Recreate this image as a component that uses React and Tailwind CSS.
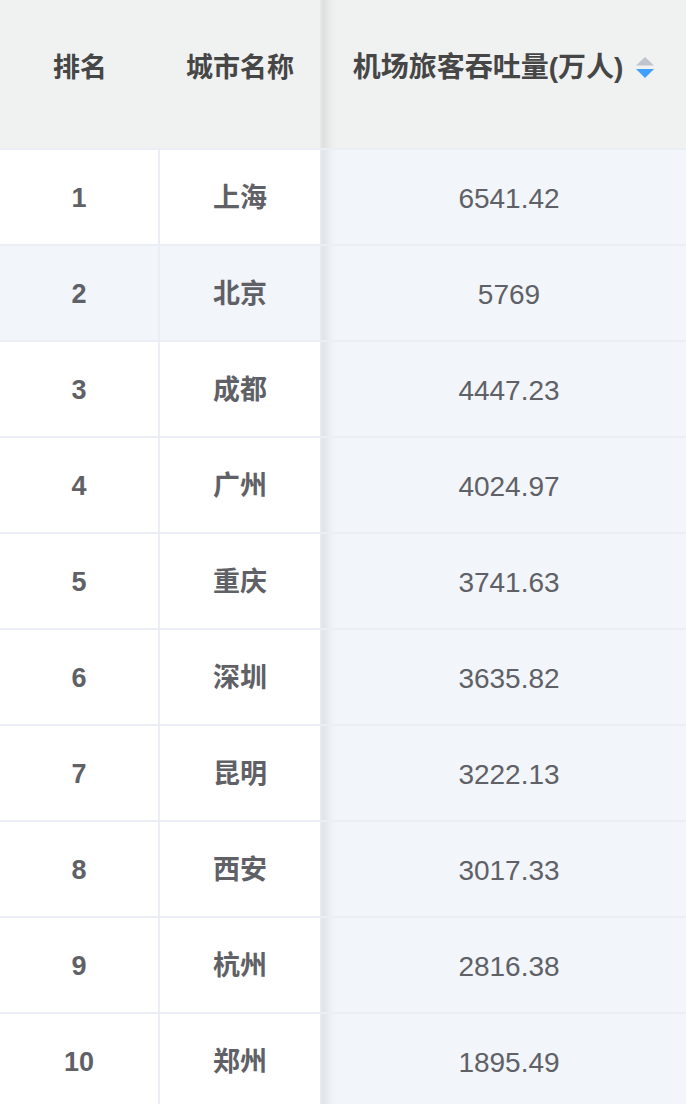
import React from "react";

const rows = [
  { rank: 1, city: "上海", value: "6541.42" },
  { rank: 2, city: "北京", value: "5769" },
  { rank: 3, city: "成都", value: "4447.23" },
  { rank: 4, city: "广州", value: "4024.97" },
  { rank: 5, city: "重庆", value: "3741.63" },
  { rank: 6, city: "深圳", value: "3635.82" },
  { rank: 7, city: "昆明", value: "3222.13" },
  { rank: 8, city: "西安", value: "3017.33" },
  { rank: 9, city: "杭州", value: "2816.38" },
  { rank: 10, city: "郑州", value: "1895.49" },
];

const font = { fontFamily: '"Liberation Sans", "Noto Sans CJK SC", sans-serif' };

const SortIcon = () => (
  <svg width="20" height="26" viewBox="0 0 20 26" className="ml-3 shrink-0">
    <path d="M10 2 L19 10.5 L1 10.5 Z" fill="#c0c4cc" />
    <path d="M1 14 L19 14 L10 23 Z" fill="#409eff" />
  </svg>
);

const App = () => {
  return (
    <div className="w-[686px] h-[1104px] overflow-hidden bg-white" style={font}>
      {/* header */}
      <div className="grid grid-cols-[160px_160px_1fr] h-[150px] bg-[#f0f1f1] border-b-2 border-[#ebeef5]">
        <div className="flex items-center justify-center pb-[12px] text-[27px] font-bold text-[#464646]">排名</div>
        <div className="flex items-center justify-center pb-[12px] text-[27px] font-bold text-[#464646]">城市名称</div>
        <div className="flex items-center justify-center pl-[4px] pr-[4px] pb-[12px] text-[28px] font-bold text-[#464646] shadow-[inset_14px_0_10px_-8px_rgba(0,0,0,0.08)] border-l-2 border-[#e6e8e8]">
          <span>机场旅客吞吐量(万人)</span>
          <SortIcon />
        </div>
      </div>
      {rows.map((r) => {
        const hover = r.rank === 2;
        return (
          <div key={r.rank} className="grid grid-cols-[160px_160px_1fr] h-[96px] border-b-2 border-[#ebeef5]">
            <div className={`flex items-center justify-center pt-[3px] text-[27px] font-bold text-[#5f6166] border-r-2 border-[#ebeef5] ${hover ? "bg-[#f2f5fa]" : "bg-white"}`}>
              {r.rank}
            </div>
            <div className={`flex items-center justify-center pt-[3px] text-[27px] font-bold text-[#5f6166] ${hover ? "bg-[#f2f5fa]" : "bg-white"}`}>
              {r.city}
            </div>
            <div className="flex items-center justify-center pl-[10px] pt-[3px] text-[28px] text-[#5f6166] bg-[#f2f5fa] border-l-2 border-[#e8eaee] shadow-[inset_14px_0_10px_-8px_rgba(0,0,0,0.08)]">
              {r.value}
            </div>
          </div>
        );
      })}
    </div>
  );
};

export default App;
